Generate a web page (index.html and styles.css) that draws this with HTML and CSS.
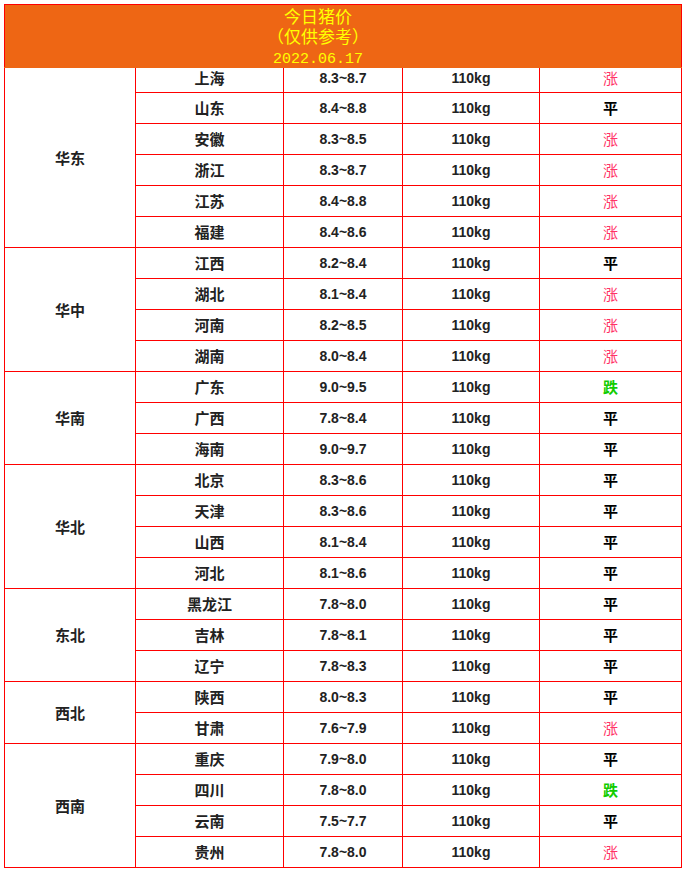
FILE: index.html
```html
<!DOCTYPE html>
<html lang="zh-CN">
<head>
<meta charset="utf-8">
<title>今日猪价</title>
<link rel="stylesheet" href="styles.css">
</head>
<body>
<table class="price-table">
  <colgroup>
    <col class="c-region">
    <col class="c-prov">
    <col class="c-price">
    <col class="c-weight">
    <col class="c-trend">
  </colgroup>
  <thead>
    <tr>
      <th colspan="5" class="title">
        <div class="title-line">今日猪价</div>
        <div class="title-line mid">（仅供参考）</div>
        <div class="title-date">2022.06.17</div>
      </th>
    </tr>
  </thead>
  <tbody>
    <tr class="first"><td class="region" rowspan="6">华东</td><td class="prov">上海</td><td class="num">8.3~8.7</td><td class="num">110kg</td><td class="up">涨</td></tr>
    <tr><td class="prov">山东</td><td class="num">8.4~8.8</td><td class="num">110kg</td><td class="flat">平</td></tr>
    <tr><td class="prov">安徽</td><td class="num">8.3~8.5</td><td class="num">110kg</td><td class="up">涨</td></tr>
    <tr><td class="prov">浙江</td><td class="num">8.3~8.7</td><td class="num">110kg</td><td class="up">涨</td></tr>
    <tr><td class="prov">江苏</td><td class="num">8.4~8.8</td><td class="num">110kg</td><td class="up">涨</td></tr>
    <tr><td class="prov">福建</td><td class="num">8.4~8.6</td><td class="num">110kg</td><td class="up">涨</td></tr>

    <tr><td class="region" rowspan="4">华中</td><td class="prov">江西</td><td class="num">8.2~8.4</td><td class="num">110kg</td><td class="flat">平</td></tr>
    <tr><td class="prov">湖北</td><td class="num">8.1~8.4</td><td class="num">110kg</td><td class="up">涨</td></tr>
    <tr><td class="prov">河南</td><td class="num">8.2~8.5</td><td class="num">110kg</td><td class="up">涨</td></tr>
    <tr><td class="prov">湖南</td><td class="num">8.0~8.4</td><td class="num">110kg</td><td class="up">涨</td></tr>

    <tr><td class="region" rowspan="3">华南</td><td class="prov">广东</td><td class="num">9.0~9.5</td><td class="num">110kg</td><td class="down">跌</td></tr>
    <tr><td class="prov">广西</td><td class="num">7.8~8.4</td><td class="num">110kg</td><td class="flat">平</td></tr>
    <tr><td class="prov">海南</td><td class="num">9.0~9.7</td><td class="num">110kg</td><td class="flat">平</td></tr>

    <tr><td class="region" rowspan="4">华北</td><td class="prov">北京</td><td class="num">8.3~8.6</td><td class="num">110kg</td><td class="flat">平</td></tr>
    <tr><td class="prov">天津</td><td class="num">8.3~8.6</td><td class="num">110kg</td><td class="flat">平</td></tr>
    <tr><td class="prov">山西</td><td class="num">8.1~8.4</td><td class="num">110kg</td><td class="flat">平</td></tr>
    <tr><td class="prov">河北</td><td class="num">8.1~8.6</td><td class="num">110kg</td><td class="flat">平</td></tr>

    <tr><td class="region" rowspan="3">东北</td><td class="prov">黑龙江</td><td class="num">7.8~8.0</td><td class="num">110kg</td><td class="flat">平</td></tr>
    <tr><td class="prov">吉林</td><td class="num">7.8~8.1</td><td class="num">110kg</td><td class="flat">平</td></tr>
    <tr><td class="prov">辽宁</td><td class="num">7.8~8.3</td><td class="num">110kg</td><td class="flat">平</td></tr>

    <tr><td class="region" rowspan="2">西北</td><td class="prov">陕西</td><td class="num">8.0~8.3</td><td class="num">110kg</td><td class="flat">平</td></tr>
    <tr><td class="prov">甘肃</td><td class="num">7.6~7.9</td><td class="num">110kg</td><td class="up">涨</td></tr>

    <tr><td class="region" rowspan="4">西南</td><td class="prov">重庆</td><td class="num">7.9~8.0</td><td class="num">110kg</td><td class="flat">平</td></tr>
    <tr><td class="prov">四川</td><td class="num">7.8~8.0</td><td class="num">110kg</td><td class="down">跌</td></tr>
    <tr><td class="prov">云南</td><td class="num">7.5~7.7</td><td class="num">110kg</td><td class="flat">平</td></tr>
    <tr><td class="prov">贵州</td><td class="num">7.8~8.0</td><td class="num">110kg</td><td class="up">涨</td></tr>
  </tbody>
</table>
</body>
</html>
```

FILE: styles.css
```css
html, body {
  margin: 0;
  padding: 0;
  background: #ffffff;
}

body {
  padding: 4px;
  font-family: "Noto Sans CJK SC", "Liberation Sans", sans-serif;
}

.price-table {
  width: 677px;
  border-collapse: collapse;
  table-layout: fixed;
  color: #222222;
}

.c-region { width: 131px; }
.c-prov { width: 148px; }
.c-price { width: 119px; }
.c-weight { width: 137px; }
.c-trend { width: 142px; }

.price-table td,
.price-table th {
  border: 1px solid #ff0000;
  padding: 0;
  text-align: center;
  vertical-align: middle;
}

.price-table th.title {
  background: #ee6614;
  color: #ffff00;
  height: 63px;
  border-bottom-color: #ee6614;
  font-weight: normal;
  padding: 3px 50px 0 0;
  box-sizing: border-box;
  vertical-align: top;
}

.title-line {
  font-family: "Liberation Sans", "Noto Sans CJK SC", sans-serif;
  font-size: 17px;
  line-height: 20px;
  height: 20px;
}

.title-line.mid {
  line-height: 19px;
  height: 19px;
}

.title-date {
  font-family: "Liberation Mono", "DejaVu Sans Mono", monospace;
  font-size: 15px;
  line-height: 26px;
  height: 20px;
}

.price-table tbody td {
  height: 31px;
  box-sizing: border-box;
}

.price-table tbody tr.first td {
  height: 25px;
  padding-bottom: 5px;
}

.price-table tbody tr.first td.region {
  height: auto;
  padding-bottom: 0;
}

.region,
.prov {
  font-family: "Noto Sans CJK SC", sans-serif;
  font-size: 15px;
  font-weight: bold;
  line-height: 18px;
}

.num {
  font-family: "Liberation Sans", "Arial", sans-serif;
  font-size: 14px;
  font-weight: bold;
  line-height: 16px;
}

.up,
.flat,
.down {
  font-family: "Noto Sans CJK SC", sans-serif;
  font-size: 15px;
  line-height: 18px;
}

.up {
  color: #ff3366;
}

.flat {
  color: #000000;
  font-weight: bold;
}

.down {
  color: #11cc00;
  font-weight: bold;
}
```
